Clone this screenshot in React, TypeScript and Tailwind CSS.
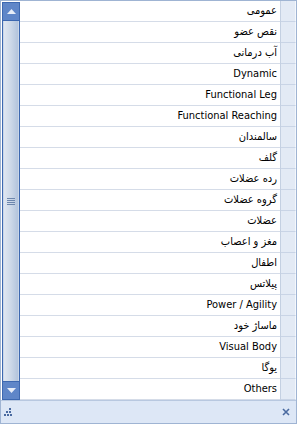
import React from "react";

const items = [
  "عمومی",
  "نقص عضو",
  "آب درمانی",
  "Dynamic",
  "Functional Leg",
  "Functional Reaching",
  "سالمندان",
  "گلف",
  "رده عضلات",
  "گروه عضلات",
  "عضلات",
  "مغز و اعصاب",
  "اطفال",
  "پیلاتس",
  "Power / Agility",
  "ماساژ خود",
  "Visual Body",
  "یوگا",
  "Others",
];

function ScrollBar() {
  return (
    <div className="w-[18px] ml-px mt-px flex flex-col border border-[#3d68b0] bg-[#c9d6e8]">
      <div className="h-[18px] flex items-center justify-center bg-[#5f86c8] border-b border-[#3d68b0]">
        <svg width="9" height="5" viewBox="0 0 9 5">
          <polygon points="4.5,0 9,5 0,5" fill="#e8eef8" />
        </svg>
      </div>
      <div className="flex-1 flex items-center justify-center bg-gradient-to-r from-[#dfe6f1] via-[#ccd8e8] to-[#b3c4dc] mx-px">
        <div className="flex flex-col gap-px">
          <div className="w-[8px] h-px bg-[#6c86ad]" />
          <div className="w-[8px] h-px bg-[#6c86ad]" />
          <div className="w-[8px] h-px bg-[#6c86ad]" />
          <div className="w-[8px] h-px bg-[#6c86ad]" />
        </div>
      </div>
      <div className="h-[18px] flex items-center justify-center bg-[#5f86c8] border-t border-[#3d68b0]">
        <svg width="9" height="5" viewBox="0 0 9 5">
          <polygon points="0,0 9,0 4.5,5" fill="#e8eef8" />
        </svg>
      </div>
    </div>
  );
}

export default function App() {
  return (
    <div
      className="w-[297px] h-[424px] flex flex-col bg-white border border-[#9fb4d3] text-[11px] text-black"
      style={{ fontFamily: "Tahoma, 'DejaVu Sans Condensed', 'Liberation Sans', sans-serif" }}
    >
      <div className="flex h-[399px]">
        <ScrollBar />
        <div className="flex-1 flex flex-col">
          {items.map((t) => (
            <div
              key={t}
              className="h-[21px] shrink-0 flex items-center justify-end pr-[3px] pt-px border-b border-[#d5dce8]"
            >
              <span dir="auto">{t}</span>
            </div>
          ))}
        </div>
        <div className="w-[16px] flex flex-col border-l border-[#c4d0e2]">
          {items.map((t) => (
            <div
              key={t}
              className="h-[21px] shrink-0 bg-[#e3eaf5] border-b border-[#c9d4e6] border-r border-r-[#f4f7fc]"
            />
          ))}
        </div>
      </div>
      <div className="flex-1 flex items-center justify-between bg-[#dde7f6] border-t border-[#b8c8e0] px-[3px]">
        <svg width="8" height="8" viewBox="0 0 8 8">
          <rect x="5" y="0" width="2" height="2" fill="#4a6aa0" />
          <rect x="2" y="3" width="2" height="2" fill="#4a6aa0" />
          <rect x="5" y="3" width="2" height="2" fill="#4a6aa0" />
          <rect x="0" y="6" width="2" height="2" fill="#4a6aa0" />
          <rect x="3" y="6" width="2" height="2" fill="#4a6aa0" />
          <rect x="6" y="6" width="2" height="2" fill="#4a6aa0" />
        </svg>
        <svg width="8" height="8" viewBox="0 0 8 8" className="mr-[3px]">
          <path d="M1 1 L7 7 M7 1 L1 7" stroke="#4a6aa0" strokeWidth="1.6" />
        </svg>
      </div>
    </div>
  );
}
